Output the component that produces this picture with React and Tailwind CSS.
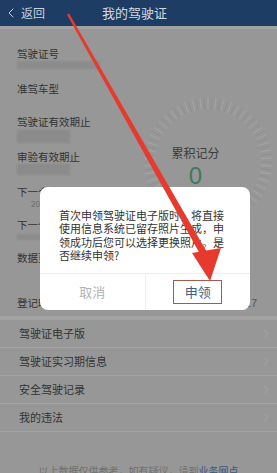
import React from 'react';
import { ChevronLeft, ChevronRight } from 'lucide-react';

function Gauge() {
  const ticks = [];
  const n = 100;
  for (let i = 0; i < n; i++) {
    const a = (i / n) * 2 * Math.PI;
    const c = Math.cos(a);
    const s = Math.sin(a);
    ticks.push(
      <line
        key={i}
        x1={70 + 53 * c}
        y1={70 + 53 * s}
        x2={70 + 64 * c}
        y2={70 + 64 * s}
        stroke={i % 2 ? '#a6a6a6' : '#8f8f8f'}
        strokeWidth="1"
      />
    );
  }
  return (
    <div className="absolute left-[138px] top-[63px] w-[140px] h-[140px]">
      <svg width="140" height="140" className="absolute left-0 top-0">
        {ticks}
      </svg>
      <div className="absolute left-0 top-[53px] w-[115px] flex flex-col items-center">
        <div className="text-[12px] leading-[16px] text-[#3c3c3c]">累积记分</div>
        <div className="mt-[2px] text-[24px] leading-[26px] text-[#3f7a5c] font-['Liberation_Sans',sans-serif]">0</div>
      </div>
    </div>
  );
}

function InfoItem({ label, h, children }) {
  return (
    <div className="flex flex-col" style={{ height: h }}>
      <div className="text-[10.5px] leading-[14px] text-[#333333]">{label}</div>
      {children}
    </div>
  );
}

function ListRow({ label, chevron = true }) {
  return (
    <div className="h-[28px] flex items-center justify-between pl-[19px] pr-[4px] border-b border-[#a3a3a3]">
      <span className="text-[11px] text-[#333333]">{label}</span>
      {chevron && <ChevronRight size={13} strokeWidth={1.5} color="#adadad" />}
    </div>
  );
}

export default function App() {
  return (
    <div className="relative w-[277px] h-[473px] overflow-hidden bg-[#979797] font-['Noto_Sans_CJK_SC','Noto_Sans',sans-serif]">
      {/* header */}
      <div className="h-[26px] bg-[#1e3d65] flex items-center relative">
        <div className="flex items-center pl-[3px] text-[#c9d0da]">
          <ChevronLeft size={16} strokeWidth={1.5} />
          <span className="ml-[2px] text-[12px]">返回</span>
        </div>
        <div className="absolute inset-0 flex items-center justify-center text-[13px] text-[#d4d9e1] pr-[8px]">我的驾驶证</div>
      </div>
      <div className="h-[3px] bg-[#a2a2a2]" />

      {/* info section */}
      <div className="relative pt-[18px] pl-[17px] pr-[20px]">
        <InfoItem label="驾驶证号" h={35}>
          <div className="w-[83px] h-[8px] bg-[#8c8c8c] blur-[1px]" />
        </InfoItem>
        <InfoItem label="准驾车型" h={33} />
        <InfoItem label="驾驶证有效期止" h={35}>
          <div className="mt-[1px] w-[53px] h-[13px] bg-[#8b8b8b] blur-[1px]" />
        </InfoItem>
        <InfoItem label="审验有效期止" h={35}>
          <div className="w-[53px] h-[11px] bg-[#8b8b8b] blur-[1px]" />
        </InfoItem>
        <InfoItem label="下一个清分日期" h={33}>
          <div className="pl-[14px] text-[8px] leading-[10px] text-[#6a6a6a]">2017-01-01</div>
        </InfoItem>
        <InfoItem label="下一个体检日期" h={33}>
          <div className="mt-[2px] w-[30px] h-[6px] bg-[#8c8c8c] blur-[1px]" />
        </InfoItem>
        <InfoItem label="数据更新时间" h={45} />
        <div className="h-[20px] flex justify-between">
          <span className="text-[10.5px] leading-[14px] text-[#333333]">登记时间</span>
          <span className="text-[10.5px] leading-[14px] text-[#555555] font-['Liberation_Sans',sans-serif]">2017</span>
        </div>
        <Gauge />
      </div>

      <div className="h-[4px] bg-[#a4a4a4]" />

      {/* list */}
      <div>
        <ListRow label="驾驶证电子版" />
        <ListRow label="驾驶证实习期信息" />
        <ListRow label="安全驾驶记录" />
        <ListRow label="我的违法" />
      </div>

      <div className="mt-[32px] text-center text-[10px] leading-[14px] text-[#6f6f6f]">
        以上数据仅供参考，如有疑议，请到<span className="text-[#3c5680]">业务网点</span>
      </div>

      {/* dialog */}
      <div className="absolute left-[40px] top-[187px] w-[210px] h-[123px] bg-white rounded-[8px] flex flex-col">
        <div className="pt-[22px] pl-[19px] pr-[24px] h-[86px] text-[11px] leading-[13.3px] text-[#333333] whitespace-nowrap">
          <div>首次申领驾驶证电子版时，将直接</div>
          <div>使用信息系统已留存照片生成，申</div>
          <div>领成功后您可以选择更换照片。是</div>
          <div>否继续申领?</div>
        </div>
        <div className="flex-1 flex border-t border-[#eeeeee]">
          <div className="flex-1 flex items-center justify-center text-[13px] text-[#b3b3b3] border-r border-[#eeeeee]">取消</div>
          <div className="flex-1 flex items-center justify-center">
            <div className="w-[49px] h-[24px] border-[1.5px] border-[#a8594e] flex items-center justify-center text-[13px] text-[#3b5e8a]">申领</div>
          </div>
        </div>
      </div>

      {/* red arrow annotation */}
      <svg width="277" height="473" className="absolute left-0 top-0 pointer-events-none">
        <polygon points="69.1,13.4 207,252.3 201,255.7 66.9,14.6" fill="#e63a2e" />
        <polygon points="192,253 221,248 210,281" fill="#e63a2e" />
      </svg>
    </div>
  );
}
